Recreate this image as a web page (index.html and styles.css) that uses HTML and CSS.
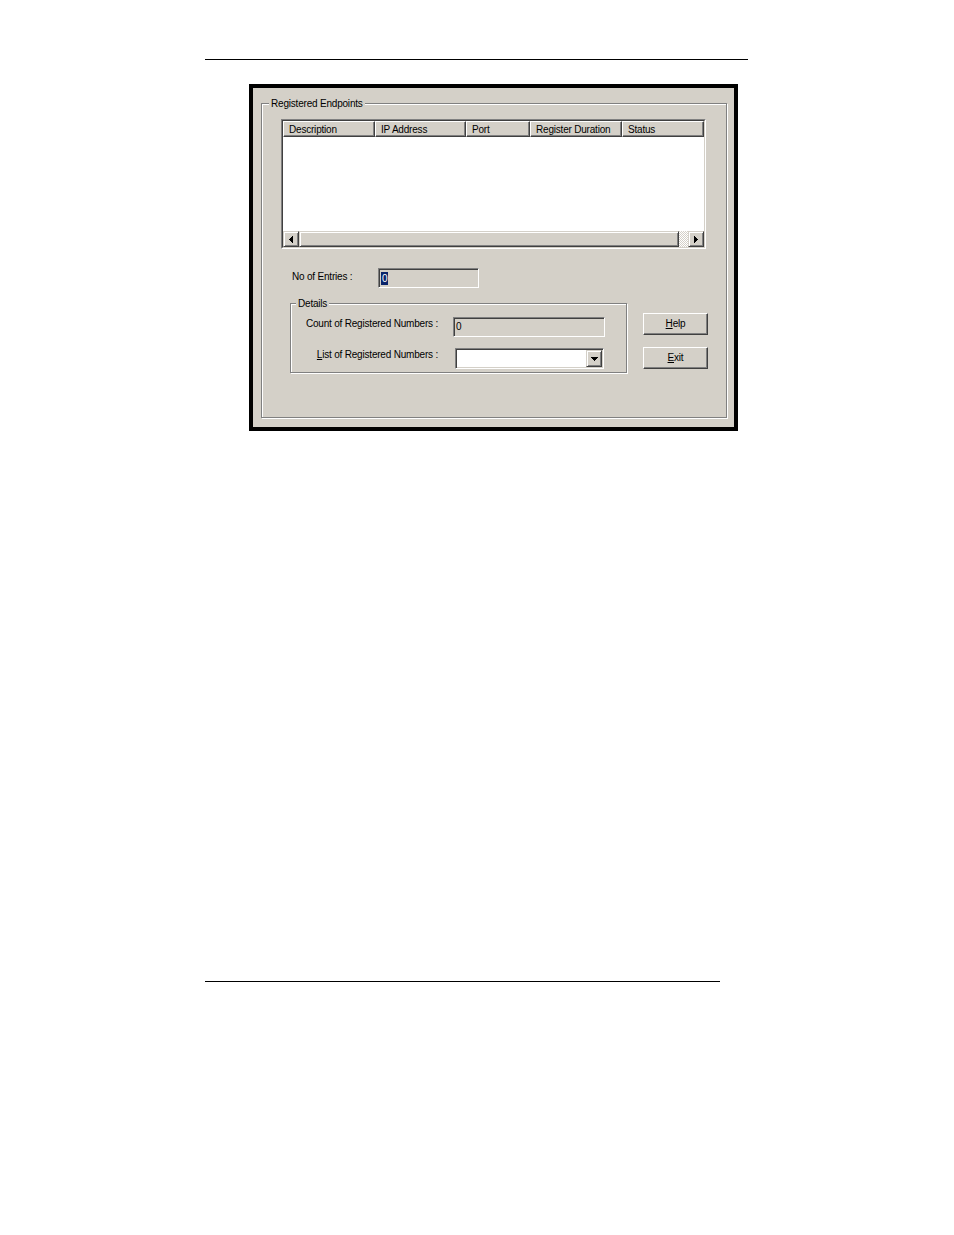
FILE: index.html
```html
<!DOCTYPE html>
<html>
<head>
<meta charset="utf-8">
<title>Registered Endpoints</title>
<link rel="stylesheet" href="styles.css">
</head>
<body>
<div class="page">
  <div class="rule rule-top"></div>
  <div class="dialog">
    <div class="group group-main">
      <div class="legend">Registered Endpoints</div>
      <div class="listview">
        <div class="lv-inner">
          <div class="lv-header">
            <div class="lv-col col-desc">Description</div>
            <div class="lv-col col-ip">IP Address</div>
            <div class="lv-col col-port">Port</div>
            <div class="lv-col col-dur">Register Duration</div>
            <div class="lv-col col-status">Status</div>
          </div>
          <div class="lv-body"></div>
          <div class="hscroll">
            <div class="sb-btn"><svg width="4" height="7" viewBox="0 0 4 7"><path d="M0 3h1v1H0z M1 2h1v3H1z M2 1h1v5H2z M3 0h1v7H3z" fill="#000"/></svg></div>
            <div class="sb-thumb"></div>
            <div class="sb-track"></div>
            <div class="sb-btn"><svg width="4" height="7" viewBox="0 0 4 7"><path d="M3 3h1v1H3z M2 2h1v3H2z M1 1h1v5H1z M0 0h1v7H0z" fill="#000"/></svg></div>
          </div>
        </div>
      </div>
      <div class="entries-row">
        <span class="lbl-entries">No of Entries :</span>
        <div class="field field-entries"><span class="sel">0</span></div>
      </div>
      <div class="details-row">
        <div class="group group-details">
          <div class="legend">Details</div>
          <div class="drow drow-count">
            <span class="dlabel">Count of Registered Numbers :</span>
            <div class="field field-count">0</div>
          </div>
          <div class="drow drow-list">
            <span class="dlabel"><u>L</u>ist of Registered Numbers :</span>
            <div class="combo">
              <div class="combo-btn"><svg width="7" height="4" viewBox="0 0 7 4"><path d="M0 0h7v1H0z M1 1h5v1H1z M2 2h3v1H2z M3 3h1v1H3z" fill="#000"/></svg></div>
            </div>
          </div>
        </div>
        <div class="buttons">
          <button class="btn"><u>H</u>elp</button>
          <button class="btn"><u>E</u>xit</button>
        </div>
      </div>
    </div>
  </div>
  <div class="rule rule-bottom"></div>
</div>
</body>
</html>
```
FILE: styles.css
```css
* { box-sizing: border-box; }

body {
  margin: 0;
  background: #fff;
  font-family: "Liberation Sans", Arial, sans-serif;
  font-size: 10px;
  letter-spacing: -0.2px;
  color: #000;
}

.page { padding-top: 59px; }

.rule { height: 1px; background: #000; margin-left: 205px; }
.rule-top { width: 543px; }
.rule-bottom { width: 515px; margin-top: 550px; }

.dialog {
  margin: 24px 0 0 249px;
  width: 489px;
  height: 347px;
  border: 4px solid #000;
  background: #d4d0c8;
  padding: 15px 0 0 8px;
}

.group {
  border: 1px solid #808080;
  box-shadow: 1px 1px 0 #fff, inset 1px 1px 0 #fff;
}
.group-main { width: 466px; height: 315px; }
.group-details { width: 337px; height: 70px; }

.legend {
  width: max-content;
  height: 12px;
  line-height: 13px;
  margin-top: -7px;
  padding: 0 2px;
  background: #d4d0c8;
}
.group-main > .legend { margin-left: 7px; }
.group-details > .legend { margin-left: 5px; }

.listview {
  margin: 10px 0 0 19px;
  width: 425px;
  height: 130px;
  border: 1px solid;
  border-color: #808080 #fff #fff #808080;
}
.lv-inner {
  height: 100%;
  border: 1px solid;
  border-color: #404040 #d4d0c8 #d4d0c8 #404040;
  display: flex;
  flex-direction: column;
}
.lv-header { display: flex; height: 16px; flex: none; }
.lv-col {
  height: 16px;
  line-height: 15px;
  padding-left: 5px;
  border: 1px solid;
  border-color: #fff #404040 #404040 #fff;
  box-shadow: inset -1px -1px 0 #808080;
  background: #d4d0c8;
  white-space: nowrap;
  overflow: hidden;
}
.col-desc { width: 92px; }
.col-ip { width: 91px; }
.col-port { width: 64px; }
.col-dur { width: 92px; }
.col-status { flex: 1; }

.lv-body { flex: 1; background: #fff; }

.hscroll { display: flex; height: 16px; flex: none; }
.sb-btn, .sb-thumb, .combo-btn {
  border: 1px solid;
  border-color: #d4d0c8 #404040 #404040 #d4d0c8;
  box-shadow: inset 1px 1px 0 #fff, inset -1px -1px 0 #808080;
  background: #d4d0c8;
}
.sb-btn {
  width: 16px;
  display: flex;
  align-items: center;
  justify-content: center;
}
.sb-btn svg, .combo-btn svg { display: block; }
.sb-thumb { width: 380px; }
.sb-track {
  flex: 1;
  background-image: conic-gradient(#fff 25%, #d4d0c8 0 50%, #fff 0 75%, #d4d0c8 0);
  background-size: 2px 2px;
}

.entries-row {
  display: flex;
  align-items: flex-start;
  margin: 19px 0 0 30px;
}
.lbl-entries {
  width: 86px;
  line-height: 12px;
  margin-top: 3px;
}

.field {
  height: 20px;
  border: 1px solid;
  border-color: #808080 #fff #fff #808080;
  box-shadow: inset 1px 1px 0 #404040, inset -1px -1px 0 #d4d0c8;
  background: #d4d0c8;
  padding-left: 2px;
  line-height: 17px;
}
.field-entries { width: 101px; }
.field-count { width: 152px; }

.sel {
  display: inline-block;
  vertical-align: middle;
  height: 13px;
  line-height: 13px;
  padding: 0 1px;
  background: #0a246a;
  color: #fff;
}

.details-row {
  display: flex;
  align-items: flex-start;
  margin: 15px 0 0 28px;
}

.drow { display: flex; align-items: flex-start; }
.drow-count { margin-top: 8px; }
.drow-list { margin-top: 11px; }
.dlabel {
  width: 162px;
  text-align: right;
  padding-right: 15px;
  white-space: nowrap;
  line-height: 12px;
  margin-top: 1px;
}

.combo {
  width: 149px;
  height: 21px;
  margin-left: 2px;
  border: 1px solid;
  border-color: #808080 #fff #fff #808080;
  box-shadow: inset 1px 1px 0 #404040, inset -1px -1px 0 #d4d0c8;
  background: #fff;
  padding: 1px;
  display: flex;
  justify-content: flex-end;
}
.combo-btn {
  width: 16px;
  height: 17px;
  display: flex;
  align-items: center;
  justify-content: center;
}

.buttons {
  display: flex;
  flex-direction: column;
  gap: 12px;
  margin: 10px 0 0 16px;
}
.btn {
  width: 65px;
  height: 22px;
  margin: 0;
  padding: 0;
  font: inherit;
  letter-spacing: inherit;
  color: #000;
  text-align: center;
  line-height: 20px;
  background: #d4d0c8;
  border: 1px solid;
  border-color: #fff #404040 #404040 #fff;
  box-shadow: inset -1px -1px 0 #808080;
  border-radius: 0;
}
```
